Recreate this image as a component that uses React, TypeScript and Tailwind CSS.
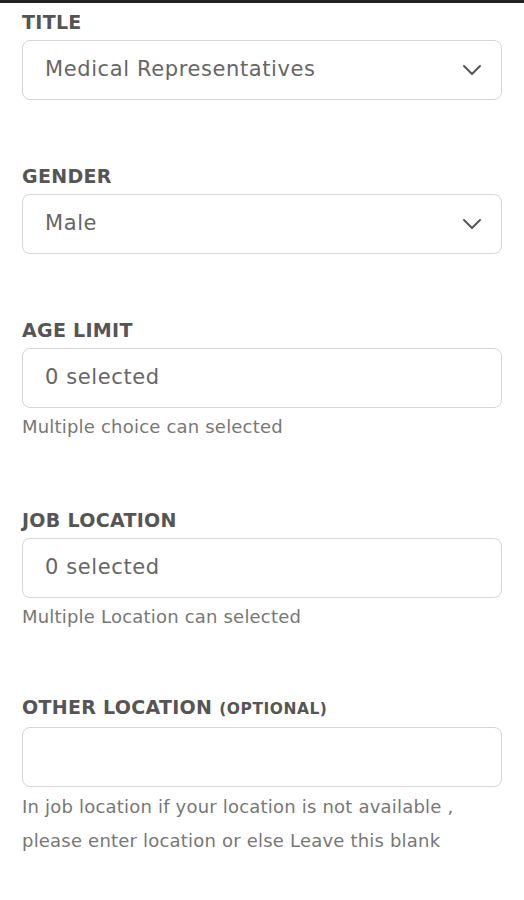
import React from "react";

const font = { fontFamily: '"DejaVu Sans", "Liberation Sans", sans-serif' };

function Chevron() {
  return (
    <svg width="20" height="12" viewBox="0 0 20 12" fill="none" className="shrink-0">
      <path d="M2 2 L10 10 L18 2" stroke="#555" strokeWidth="2" strokeLinecap="round" strokeLinejoin="round" />
    </svg>
  );
}

function Label({ children, extra }: { children: React.ReactNode; extra?: string }) {
  return (
    <div className="text-[19px] leading-[24px] font-bold text-[#555] tracking-[0.3px]">
      {children}
      {extra && <span className="text-[15.5px] ml-[7px] tracking-[0.5px]">{extra}</span>}
    </div>
  );
}

function Box({ value, select }: { value?: string; select?: boolean }) {
  return (
    <div className="mt-[6px] h-[60px] border border-[#d6d6d6] rounded-[8px] flex items-center justify-between pl-[22px] pr-[19px] bg-white">
      <span className="text-[21px] text-[#666] tracking-[0.6px]">{value ?? ""}</span>
      {select && <Chevron />}
    </div>
  );
}

function Help({ children }: { children: React.ReactNode }) {
  return <div className="mt-[6px] text-[18px] leading-[26px] tracking-[0.2px] text-[#777]">{children}</div>;
}

export default function App() {
  return (
    <div className="bg-white min-h-[900px] w-[524px]" style={font}>
      <div className="h-[3px] bg-[#222]" />
      <div className="px-[22px] pt-[7px]">
        <Label>TITLE</Label>
        <Box value="Medical Representatives" select />

        <div className="mt-[64px]">
          <Label>GENDER</Label>
          <Box value="Male" select />
        </div>

        <div className="mt-[64px]">
          <Label>AGE LIMIT</Label>
          <Box value="0 selected" />
          <Help>Multiple choice can selected</Help>
        </div>

        <div className="mt-[68px]">
          <Label>JOB LOCATION</Label>
          <Box value="0 selected" />
          <Help>Multiple Location can selected</Help>
        </div>

        <div className="mt-[65px]">
          <Label extra="(OPTIONAL)">OTHER LOCATION</Label>
          <Box />
          <div className="mt-[3px] text-[18px] leading-[34px] tracking-[0.2px] text-[#777]">
            In job location if your location is not available ,<br />
            please enter location or else Leave this blank
          </div>
        </div>
      </div>
    </div>
  );
}
